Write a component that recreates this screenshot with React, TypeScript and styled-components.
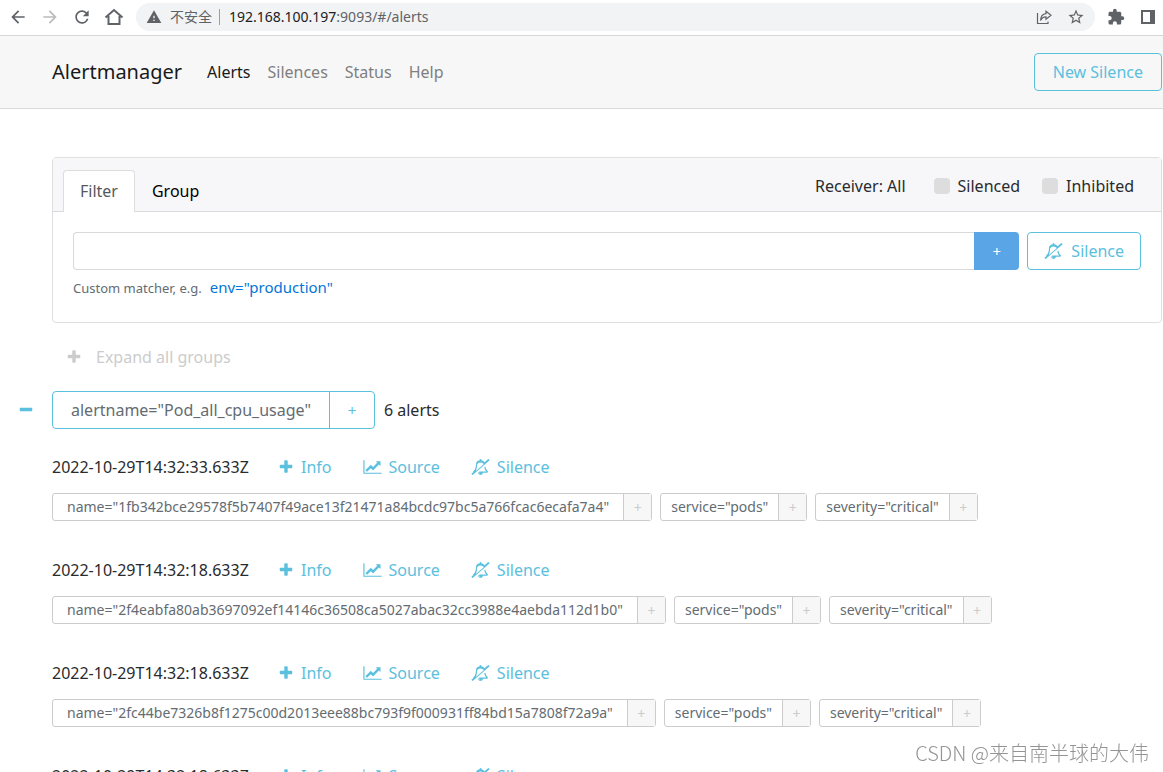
import React from 'react';
import styled, { createGlobalStyle, css } from 'styled-components';
import { MdArrowBack, MdArrowForward, MdExtension, MdRefresh, MdStarBorder, MdWarning } from 'react-icons/md';

const info = '#5bc0de';

const GlobalStyle = createGlobalStyle`
  * { box-sizing: border-box; }
  body {
    margin: 0;
    background: #fff;
    color: #292b2c;
    font: 16px/24px "Noto Sans", "Noto Sans CJK SC", sans-serif;
  }
  button, input { font: inherit; margin: 0; }
  button { cursor: pointer; }
  a { text-decoration: none; }
`;

const Page = styled.div`
  height: 100vh;
  overflow: hidden;
`;

/* ---------- browser toolbar ---------- */

const Toolbar = styled.div`
  display: flex;
  align-items: center;
  height: 36px;
  padding: 0 8px 2px;
  gap: 12px;
  border-bottom: 1px solid #d5d6d8;
  color: #5f6368;
`;

const ToolButton = styled.button<{ $dim?: boolean }>`
  display: flex;
  flex: none;
  padding: 0;
  border: 0;
  background: none;
  color: ${(p) => (p.$dim ? '#babcbe' : '#5f6368')};
`;

const AddressBar = styled.div`
  display: flex;
  flex: 1;
  align-items: center;
  height: 28px;
  padding: 0 10px;
  border-radius: 14px;
  background: #f1f3f4;
  font-size: 14px;
  line-height: 20px;
`;

const Security = styled.span`
  display: flex;
  align-items: center;
  gap: 8px;
  height: 16px;
  margin-right: 9px;
  padding-right: 7px;
  border-right: 1px solid #9aa0a6;
`;

const Address = styled.span`
  flex: 1;
  b { font-weight: 400; color: #202124; }
`;

const AddressActions = styled.span`
  display: flex;
  gap: 14px;
`;

const WindowActions = styled.span`
  display: flex;
  align-items: center;
  gap: 16px;
`;

/* ---------- application header ---------- */

const Header = styled.header`
  display: flex;
  align-items: center;
  height: 73px;
  padding: 0 1px 0 52px;
  border-bottom: 1px solid #d9d9d9;
  background: #f7f7f7;
`;

const Brand = styled.a`
  margin-right: 25px;
  color: #191919;
  font-size: 20px;
  line-height: 30px;
`;

const Nav = styled.nav`
  display: flex;
  flex: 1;
  gap: 17px;
`;

const NavLink = styled.a<{ $active?: boolean }>`
  color: ${(p) => (p.$active ? '#191919' : '#7f7f7f')};
`;

const OutlineButton = styled.button<{ $wide?: boolean }>`
  display: flex;
  align-items: center;
  gap: 8px;
  height: 38px;
  padding: 0 ${(p) => (p.$wide ? 18 : 16)}px;
  border: 1px solid ${info};
  border-radius: 4px;
  background: transparent;
  color: ${info};
  white-space: nowrap;
`;

/* ---------- filter card ---------- */

const Main = styled.main`
  padding: 48px 1px 0 52px;
`;

const Card = styled.section`
  border: 1px solid #dfdfdf;
  border-radius: 4px;
`;

const CardHeader = styled.div`
  display: flex;
  align-items: flex-end;
  justify-content: space-between;
  height: 54px;
  padding: 0 27px 0 10px;
  border-bottom: 1px solid #d9dadc;
  background: #f7f7f9;
`;

const Tabs = styled.div`
  display: flex;
  margin-bottom: -1px;
`;

const Tab = styled.button<{ $active?: boolean }>`
  height: 42px;
  padding: 0 16px 2px;
  border: 1px solid transparent;
  border-bottom: 0;
  border-radius: 4px 4px 0 0;
  background: transparent;
  color: #000;
  ${(p) => p.$active && css`
    border-color: #ddd;
    background: #fff;
    color: #55595c;
  `}
`;

const Options = styled.div`
  display: flex;
  gap: 28px;
  padding-bottom: 13px;
`;

const CheckGroup = styled.div`
  display: flex;
  gap: 22px;
`;

const CheckLabel = styled.label`
  display: flex;
  align-items: center;
  gap: 8px;
`;

const CheckBox = styled.input`
  appearance: none;
  width: 16px;
  height: 16px;
  border-radius: 4px;
  background: #ddd;
  &:checked { background: #0275d8; }
`;

const CardBody = styled.div`
  padding: 20px 20px 22px;
`;

const MatcherRow = styled.form`
  display: flex;
`;

const MatcherInput = styled.input`
  flex: 1;
  min-width: 0;
  height: 38px;
  padding: 0 12px;
  border: 1px solid #d9d9d9;
  border-right: 0;
  border-radius: 4px 0 0 4px;
`;

const AddMatcher = styled.button`
  width: 45px;
  height: 38px;
  margin-right: 8px;
  border: 0;
  border-radius: 0 4px 4px 0;
  background: #5aa5e6;
  color: #fff;
  font-size: 15px;
`;

const Help = styled.p`
  display: flex;
  align-items: baseline;
  gap: 8px;
  margin: 5px 0 0;
  color: #636c72;
  font-size: 13px;
  a { color: #0275d8; font-size: 15px; }
`;

/* ---------- groups and alerts ---------- */

const ExpandAll = styled.button`
  display: flex;
  align-items: center;
  gap: 14px;
  margin: 22px 0 22px 14px;
  padding: 0;
  border: 0;
  background: none;
  color: #ccc;
`;

const GroupRow = styled.div`
  display: flex;
  align-items: center;
  gap: 9px;
  margin-left: -34px;
`;

const Collapse = styled.button`
  display: flex;
  margin-right: 9px;
  padding: 0;
  border: 0;
  background: none;
  color: ${info};
`;

const GroupLabel = styled.span`
  display: flex;
  height: 38px;
  border: 1px solid ${info};
  border-radius: 4px;
  line-height: 36px;
  color: #636c72;
  span { padding: 0 18px; }
  button {
    width: 45px;
    padding: 0;
    border: 0;
    border-left: 1px solid ${info};
    background: none;
    color: ${info};
    font-size: 15px;
  }
`;

const AlertList = styled.ul`
  margin: 26px 0 0;
  padding: 0;
  list-style: none;
`;

const AlertItem = styled.li`
  padding-bottom: 37px;
`;

const AlertHead = styled.div`
  display: flex;
  align-items: center;
  gap: 31px;
  height: 24px;
  margin-bottom: 14px;
  color: #292b2c;
`;

const AlertTime = styled.time`
  min-width: 204px;
  margin-right: -9px;
`;

const LinkAction = styled.a`
  display: flex;
  align-items: center;
  gap: 7px;
  color: ${info};
`;

const Chips = styled.div`
  display: flex;
  gap: 8px;
`;

const Chip = styled.span<{ $long: boolean }>`
  display: flex;
  height: 28px;
  border: 1px solid #ccc;
  border-radius: 3px;
  color: #636c72;
  font-size: 14px;
  line-height: 25px;
  white-space: nowrap;
  span { padding: 0 ${(p) => (p.$long ? 14 : 10)}px; }
  button {
    width: 28px;
    padding: 0;
    border: 0;
    border-left: 1px solid #ccc;
    background: #f7f7f7;
    color: #ccc;
  }
`;

const Watermark = styled.div`
  position: fixed;
  right: 14px;
  bottom: 4px;
  color: #949494;
  font: 300 20px/30px "Noto Sans CJK SC", sans-serif;
`;

/* ---------- icons ---------- */

const icons = {
  plus: [1792, 'M1600 736v192q0 40-28 68t-68 28h-416v416q0 40-28 68t-68 28h-192q-40 0-68-28t-28-68v-416h-416q-40 0-68-28t-28-68v-192q0-40 28-68t68-28h416v-416q0-40 28-68t68-28h192q40 0 68 28t28 68v416h416q40 0 68 28t28 68z'],
  minus: [1792, 'M1600 736v192q0 40-28 68t-68 28h-1216q-40 0-68-28t-28-68v-192q0-40 28-68t68-28h1216q40 0 68 28t28 68z'],
  chart: [2048, 'M2048 1536v128h-2048v-1536h128v1408h1920zm-128-1248v435q0 21-19.5 29.5t-35.5-7.5l-121-121-633 633q-10 10-23 10t-23-10l-233-233-416 416-192-192 585-585q10-10 23-10t23 10l233 233 464-464-121-121q-16-16-7.5-35.5t29.5-19.5h435q14 0 23 9t9 23z'],
  bell: [2048, 'M1040 1696q0-16-16-16-59 0-101.5-42.5t-42.5-101.5q0-16-16-16t-16 16q0 73 51.5 124.5t124.5 51.5q16 0 16-16zM503 1349l877-760q-42-88-132.5-146.5t-223.5-58.5q-93 0-169.5 31.5t-121.5 80.5-69 103-24 105q0 384-137 645zM1856 1408q0 52-38 90t-90 38h-448q0 106-75 181t-181 75-180.5-74.5-75.5-180.5l149-129h757q-166-187-227-459l111-97q61 356 298 556zM1942 16l84 96q8 10 7.5 23.5t-10.5 22.5l-1872 1622q-10 8-23.5 7t-21.5-11l-84-96q-8-10-7.5-23.5t10.5-21.5l186-161q-19-32-19-66 50-42 91-88t85-119.5 74.5-158.5 50-206 19.5-260q0-152 117-282.5t307-158.5q-8-19-8-39 0-40 28-68t68-28 68 28 28 68q0 20-8 39 124 18 219 82.5t148 157.5l418-363q10-8 23.5-7t21.5 11z'],
} as const;

function Icon({ name }: { name: keyof typeof icons }) {
  const [width, path] = icons[name];
  return (
    <svg width={width === 2048 ? 19 : 16} height={16} viewBox={`0 0 ${width} 1792`} fill="currentColor" aria-hidden="true">
      <path d={path} />
    </svg>
  );
}

const HomeIcon = () => (
  <svg width="20" height="20" viewBox="0 0 20 20" fill="none" stroke="currentColor" strokeWidth="2" aria-hidden="true">
    <path d="M1.500 10.500 10 3l8.500 7.500M4.500 9v8h11V9" />
  </svg>
);

const ShareIcon = () => (
  <svg width="18" height="18" viewBox="0 0 18 18" fill="none" stroke="currentColor" strokeWidth="1.200" aria-hidden="true">
    <path d="M2.500 5v10.500h10.500v-2" />
    <path d="M5.500 12.500c.3-4.500 2.300-6.500 5.500-6.800V3.200L16 7.200l-5 4V8.800c-2.500 0-4.500 1.500-5.500 3.700z" />
  </svg>
);

const SidePanelIcon = () => (
  <svg width="14" height="14" viewBox="0 0 14 14" fill="currentColor" aria-hidden="true">
    <path d="M0 0h14v14H0zM2 2v10h7V2z" fillRule="evenodd" />
  </svg>
);

/* ---------- data ---------- */

const alerts = [
  { time: '2022-10-29T14:32:33.633Z', name: '1fb342bce29578f5b7407f49ace13f21471a84bcdc97bc5a766fcac6ecafa7a4' },
  { time: '2022-10-29T14:32:18.633Z', name: '2f4eabfa80ab3697092ef14146c36508ca5027abac32cc3988e4aebda112d1b0' },
  { time: '2022-10-29T14:32:18.633Z', name: '2fc44be7326b8f1275c00d2013eee88bc793f9f000931ff84bd15a7808f72a9a' },
  { time: '2022-10-29T14:32:18.633Z', name: '' },
];

function Label({ name, value }: { name: string; value: string }) {
  return (
    <Chip $long={value.length > 32}>
      <span>{`${name}="${value}"`}</span>
      <button type="button" aria-label={`Filter by ${name}`}>+</button>
    </Chip>
  );
}

export default function App() {
  return (
    <Page>
      <GlobalStyle />
      <Toolbar>
        <ToolButton aria-label="Back"><MdArrowBack size={20} /></ToolButton>
        <ToolButton aria-label="Forward" $dim><MdArrowForward size={20} /></ToolButton>
        <ToolButton aria-label="Reload"><MdRefresh size={20} /></ToolButton>
        <ToolButton aria-label="Home"><HomeIcon /></ToolButton>
        <AddressBar>
          <Security><MdWarning size={16} />不安全</Security>
          <Address><b>192.168.100.197</b>:9093/#/alerts</Address>
          <AddressActions>
            <ToolButton aria-label="Share"><ShareIcon /></ToolButton>
            <ToolButton aria-label="Bookmark"><MdStarBorder size={18} /></ToolButton>
          </AddressActions>
        </AddressBar>
        <WindowActions>
          <ToolButton aria-label="Extensions"><MdExtension size={18} /></ToolButton>
          <ToolButton aria-label="Side panel"><SidePanelIcon /></ToolButton>
        </WindowActions>
      </Toolbar>

      <Header>
        <Brand href="#/">Alertmanager</Brand>
        <Nav>
          <NavLink href="#/alerts" $active>Alerts</NavLink>
          <NavLink href="#/silences">Silences</NavLink>
          <NavLink href="#/status">Status</NavLink>
          <NavLink href="#/help">Help</NavLink>
        </Nav>
        <OutlineButton $wide>New Silence</OutlineButton>
      </Header>

      <Main>
        <Card>
          <CardHeader>
            <Tabs>
              <Tab $active>Filter</Tab>
              <Tab>Group</Tab>
            </Tabs>
            <Options>
              <span>Receiver: All</span>
              <CheckGroup>
                <CheckLabel><CheckBox type="checkbox" />Silenced</CheckLabel>
                <CheckLabel><CheckBox type="checkbox" />Inhibited</CheckLabel>
              </CheckGroup>
            </Options>
          </CardHeader>
          <CardBody>
            <MatcherRow>
              <MatcherInput type="text" aria-label="Matcher" />
              <AddMatcher type="button" aria-label="Add matcher">+</AddMatcher>
              <OutlineButton type="button"><Icon name="bell" />Silence</OutlineButton>
            </MatcherRow>
            <Help>Custom matcher, e.g. <a href="#/alerts">env="production"</a></Help>
          </CardBody>
        </Card>

        <ExpandAll><Icon name="plus" />Expand all groups</ExpandAll>

        <GroupRow>
          <Collapse aria-label="Collapse group"><Icon name="minus" /></Collapse>
          <GroupLabel>
            <span>alertname="Pod_all_cpu_usage"</span>
            <button type="button" aria-label="Filter by alertname">+</button>
          </GroupLabel>
          6 alerts
        </GroupRow>

        <AlertList>
          {alerts.map((alert, i) => (
            <AlertItem key={i}>
              <AlertHead>
                <AlertTime>{alert.time}</AlertTime>
                <LinkAction href="#/alerts"><Icon name="plus" />Info</LinkAction>
                <LinkAction href="#/alerts"><Icon name="chart" />Source</LinkAction>
                <LinkAction href="#/silences/new"><Icon name="bell" />Silence</LinkAction>
              </AlertHead>
              {alert.name && (
                <Chips>
                  <Label name="name" value={alert.name} />
                  <Label name="service" value="pods" />
                  <Label name="severity" value="critical" />
                </Chips>
              )}
            </AlertItem>
          ))}
        </AlertList>
      </Main>

      <Watermark>CSDN @来自南半球的大伟</Watermark>
    </Page>
  );
}
